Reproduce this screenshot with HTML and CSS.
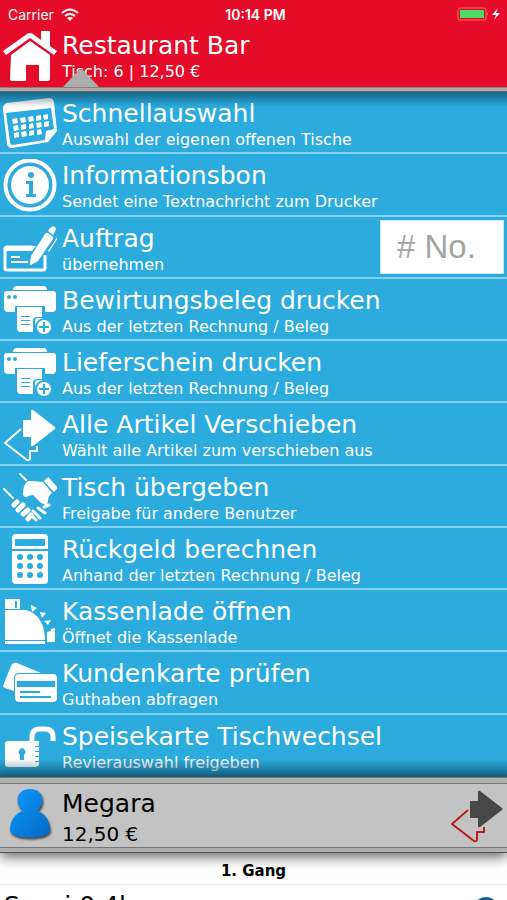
FILE: index.html
```html
<!DOCTYPE html>
<html lang="de">
<head>
<meta charset="utf-8">
<meta name="viewport" content="width=device-width, initial-scale=1">
<title>Restaurant Bar</title>
<link rel="stylesheet" href="styles.css">
</head>
<body>
<svg class="defs" aria-hidden="true">
  <symbol id="printer" viewBox="0 0 54 56">
    <path d="M14 2h26q4 0 4 4H10q0-4 4-4z"/>
    <path d="M4 7h46q3 0 3 3v14q0 4-4 4H5q-4 0-4-4V10q0-3 3-3z"/>
    <g class="cut"><circle cx="6" cy="13" r="2"/><circle cx="12" cy="13" r="2"/><path d="M12 22h30v8H12z"/></g>
    <path d="M14 23h25v13l-4 12H18q-4 0-4-4z"/>
    <g class="cut"><path d="M18 32h9v1h-9zM18 36h9v1h-9zM18 40h9v1h-9zM30 48V37q0-4 4-4h7v15z"/></g>
    <path d="M32 44v-7q0-3 3-3h5z"/>
    <circle class="cut" cx="41" cy="43" r="9"/><circle cx="41" cy="43" r="7"/>
    <path class="cut" d="M40 38h2v4h4v2h-4v4h-2v-4h-4v-2h4z"/>
  </symbol>
  <symbol id="move" viewBox="0 0 54 56">
    <path d="M18 21 2 35l22 17q3 1 3-2v-7h7v-5" fill="none" stroke="currentColor" stroke-width="2" stroke-linejoin="round"/>
    <path d="M20 12h8V3q0-2 2-1l22 17q1 1 0 2L30 38q-2 1-2-1v-8h-8z"/>
  </symbol>
</svg>

<main class="app">
  <div class="status">
    <span class="carrier">Carrier
      <svg class="wifi" viewBox="0 0 18 13"><path d="M1 5q8-7 16 0M4 8q5-4 10 0" fill="none" stroke="#fff" stroke-width="2"/><path d="M6 10q3-2 6 0l-3 3z" fill="#fff"/></svg>
    </span>
    <time class="clock">10:14 PM</time>
    <svg class="battery" viewBox="0 0 46 14"><rect x="1" y="1" width="28" height="12" rx="2" fill="none" stroke="#f0705a"/><rect x="3" y="3" width="24" height="8" fill="#4cd964"/><path d="M30 5q2 2 0 4z" fill="#f0705a"/><path d="M41 1l-6 7h4l-2 5 6-7h-4z" fill="#fff"/></svg>
  </div>

  <header class="row header">
    <svg class="icon" viewBox="0 0 54 56"><path d="M0 22 24 5q3-2 6 0l8 6V2h9v15l7 5-3 4L27 9 3 26z"/><path d="M8 26 27 12l20 14v24q0 2-2 2h-9V36H23v16H9q-2 0-2-2z"/></svg>
    <div class="text"><h1 class="title">Restaurant Bar</h1><p class="sub">Tisch: 6 | 12,50 €</p></div>
    <svg class="pointer" viewBox="0 0 36 18"><path d="M0 18 15 2q3-3 6 0l15 16z"/></svg>
  </header>

  <div class="rail"></div>

  <nav class="menu">
    <button class="row item" type="button">
      <svg class="icon" viewBox="0 0 54 56"><path fill-rule="evenodd" d="M4 6 46 1q4 0 5 4l3 29-9 11-36 6q-4 0-5-4L0 12q0-5 4-6zM3 16l4 29q0 3 3 3l32-5 1-9 8-2-3-21z"/><path d="m9 22 5-1 1 5-5 1zm8-1 5-1 1 5-5 1zm8-1 5-1 1 5-5 1zm8-1 5-1v5l-5 1zm7-1 5-1v5l-4 1zM10 29l5-1 1 5-5 1zm8-1 5-1v5l-5 1zm8-1 4-1 1 5-5 1zm7-1 5-1 1 5-5 1zm8-1 5-1v5l-5 1zM11 36l5-1v5l-5 1zm7-1 5-1 1 5-5 1zm8-1 5-1v5l-5 1zm8-1 4-1 1 5-5 1z"/></svg>
      <span class="text"><span class="title">Schnellauswahl</span><span class="sub">Auswahl der eigenen offenen Tische</span></span>
    </button>
    <button class="row item" type="button">
      <svg class="icon" viewBox="0 0 54 56"><circle cx="27" cy="26" r="24.500" fill="none" stroke="#fff" stroke-width="4"/><circle cx="27" cy="26" r="19"/><g class="cut"><circle cx="28" cy="16" r="3"/><path d="M23 22h7v13h3v3H23v-3h3V25h-3z"/></g></svg>
      <span class="text"><span class="title">Informationsbon</span><span class="sub">Sendet eine Textnachricht zum Drucker</span></span>
    </button>
    <div class="row item">
      <svg class="icon" viewBox="0 0 54 56"><path d="M30 25H4q-2 0-2 2v19q0 2 2 2h36q2 0 2-2V33" fill="none" stroke="#fff" stroke-width="3"/><path d="M3 24h30l-4 5H3zM8 34h9v2H8zM8 39h17v2H8z"/><path d="M28 34 42 12q1-2 3-1l4 3q2 1 1 3L35 39l-7 4q-2 0-1-2zM45 9l2-3 3-2 3 2-1 4-2 3zM51 20l3-5 1 1-9 14-1-1z"/></svg>
      <label class="text" for="order"><span class="title">Auftrag</span><span class="sub">übernehmen</span></label>
      <input class="number" id="order" type="text" placeholder="# No.">
    </div>
    <button class="row item" type="button">
      <svg class="icon"><use href="#printer"/></svg>
      <span class="text"><span class="title">Bewirtungsbeleg drucken</span><span class="sub">Aus der letzten Rechnung / Beleg</span></span>
    </button>
    <button class="row item" type="button">
      <svg class="icon"><use href="#printer"/></svg>
      <span class="text"><span class="title">Lieferschein drucken</span><span class="sub">Aus der letzten Rechnung / Beleg</span></span>
    </button>
    <button class="row item" type="button">
      <svg class="icon"><use href="#move"/></svg>
      <span class="text"><span class="title">Alle Artikel Verschieben</span><span class="sub">Wählt alle Artikel zum verschieben aus</span></span>
    </button>
    <button class="row item" type="button">
      <svg class="icon" viewBox="0 0 54 56"><g fill="none" stroke="#fff" stroke-linecap="round"><path d="m17 3 6 6M1 18l9 9" stroke-width="2"/><path d="m43 8 10 11" stroke-width="6" stroke-linecap="butt"/><path d="m11 34 3-3M15 39l5-5M20 43l5-4M25 48l3-4" stroke-width="5"/><path d="m30 40 7 7M35 37l7 5M30 46l3 3M41 36l5-2" stroke-width="3"/></g><path d="M20 23q0-10 5-13 8 0 15 1l9 11q-4 3-4 8 0 3-2 4l-5-2-8-8q-4 0-6 2-3 1-4-3z"/></svg>
      <span class="text"><span class="title">Tisch übergeben</span><span class="sub">Freigabe für andere Benutzer</span></span>
    </button>
    <button class="row item" type="button">
      <svg class="icon" viewBox="0 0 54 56"><path fill-rule="evenodd" d="M13 1h28q4 0 4 4v11H9V5q0-4 4-4zM12 6v7h30V6z"/><path d="M9 18h36v29q0 4-4 4H13q-4 0-4-4z"/><g class="cut"><circle cx="17" cy="24" r="3"/><circle cx="27" cy="24" r="3"/><circle cx="37" cy="24" r="3"/><circle cx="17" cy="33" r="3"/><circle cx="27" cy="33" r="3"/><circle cx="37" cy="33" r="3"/><circle cx="17" cy="42" r="3"/><circle cx="27" cy="42" r="3"/><circle cx="37" cy="42" r="3"/></g></svg>
      <span class="text"><span class="title">Rückgeld berechnen</span><span class="sub">Anhand der letzten Rechnung / Beleg</span></span>
    </button>
    <button class="row item" type="button">
      <svg class="icon" viewBox="0 0 54 56"><path fill-rule="evenodd" d="M2 4h15v10H2zM12 6v7h2V6zM2 15h21c12 3 19 14 19 30H2zM2 46h40v3H2zM44 37l4-1v-2l4-1v14h-8zM28 10l6 3-5 4zM37 17l6 1-4 5zM41 26l7-1-3 5z"/></svg>
      <span class="text"><span class="title">Kassenlade öffnen</span><span class="sub">Öffnet die Kassenlade</span></span>
    </button>
    <button class="row item" type="button">
      <svg class="icon" viewBox="0 0 54 56"><path d="M0 29 8 9q2-4 6-3l24 10H16q-5 0-5 5v13l-9-3q-2-1-2-2z"/><path fill-rule="evenodd" d="M16 17h34q4 0 4 4v20q0 4-4 4H16q-4 0-4-4V21q0-4 4-4zM14 24v6h38v-6zM17 34v2h20v-2zM17 39v2h31v-2z"/></svg>
      <span class="text"><span class="title">Kundenkarte prüfen</span><span class="sub">Guthaben abfragen</span></span>
    </button>
    <button class="row item" type="button">
      <svg class="icon" viewBox="0 0 54 56"><path d="M29 21v-4q0-8 8-8h5q8 0 8 8v4" fill="none" stroke="#fff" stroke-width="5"/><path fill-rule="evenodd" d="M5 21h31v5h-4v1h4v4h-4v1h4v4h-4v1h4v4h-4v1h4v3q-1 2-4 2H5q-3 0-3-3V24q0-3 3-3zM19 28a4 4 0 0 0-2 7v5h4v-5a4 4 0 0 0-2-7z"/></svg>
      <span class="text"><span class="title">Speisekarte Tischwechsel</span><span class="sub">Revierauswahl freigeben</span></span>
    </button>
  </nav>

  <section class="guest">
    <div class="row person">
      <svg class="icon" viewBox="0 0 54 56"><defs><linearGradient id="skin" x1="0" y1="0" x2="1" y2="1"><stop offset="0" stop-color="#0a9bff"/><stop offset="1" stop-color="#0568c4"/></linearGradient></defs><path class="avatar" d="M27 2c14 0 16 15 7 22 8 2 13 10 13 19 0 10-40 10-40 0 0-9 5-17 13-19C11 17 13 2 27 2z"/></svg>
      <div class="text"><h2 class="title">Megara</h2><p class="sub amount">12,50 €</p></div>
      <button class="move" type="button" aria-label="Verschieben"><svg class="icon duo"><use href="#move"/></svg></button>
    </div>
  </section>

  <h3 class="course">1. Gang</h3>
  <div class="dish"><span class="title">Spezi 0,4l</span><span class="dot"></span></div>
</main>
</body>
</html>
```
FILE: styles.css
```css
* { box-sizing: border-box; }

body {
  margin: 0;
  background: #fff;
  font-family: Verdana, "DejaVu Sans", sans-serif;
  color: #fff;
}

h1, h2, h3, p { margin: 0; font-weight: 400; }

button {
  border: 0;
  padding: 0;
  background: none;
  color: inherit;
  font: inherit;
  text-align: left;
}

.defs { display: none; }

.app {
  display: flex;
  flex-direction: column;
  height: 100vh;
  overflow: hidden;
}

.status {
  display: grid;
  grid-template-columns: 1fr auto 1fr;
  align-items: center;
  height: 28px;
  padding: 0 4px 0 8px;
  background: #e60b29;
  font: 14px Inter, "Liberation Sans", sans-serif;
}

.carrier { display: flex; align-items: center; gap: 7px; }
.clock { font-weight: 600; }
.wifi { width: 18px; height: 13px; }
.battery { width: 46px; height: 14px; justify-self: end; }

.row {
  display: flex;
  gap: 5px;
  padding: 0 3px;
}

.icon { flex: none; display: block; width: 54px; height: 56px; fill: #fff; }
.cut { fill: #2cabde; }

.text { flex: 1; display: block; padding-top: 1px; white-space: nowrap; }
.title { display: block; font-size: 25px; line-height: 32px; }
.sub { display: block; font-size: 16px; line-height: 20px; }

.header {
  position: relative;
  height: 59px;
  padding-top: 1px;
  background: #e60b29;
}

.pointer {
  position: absolute;
  left: 63px;
  bottom: 0;
  width: 36px;
  height: 18px;
  fill: #adadad;
}

.rail {
  height: 5px;
  background: #b0acac;
  border-top: 1px solid #8c7c7c;
  border-bottom: 1px solid #666;
}

.menu {
  position: relative;
  flex: 1;
  display: grid;
  grid-auto-rows: 1fr;
  min-height: 0;
  background: #2cabde;
}

.menu::after {
  content: "";
  position: absolute;
  inset: 0;
  pointer-events: none;
  background:
    linear-gradient(rgba(0, 30, 45, .5), transparent) top / 100% 15px no-repeat,
    linear-gradient(transparent, rgba(0, 30, 45, .5)) bottom / 100% 18px no-repeat;
}

.item {
  min-height: 0;
  padding-top: 5px;
  border-bottom: 2px solid #86d0f0;
  overflow: hidden;
}

.item:last-child { border-bottom: 0; }

.number {
  width: 124px;
  height: 54px;
  margin-top: -2px;
  padding: 0 16px;
  border: 1px solid #c8eaf8;
  background: #fff;
  color: #555;
  font: 33px "Liberation Sans", sans-serif;
}

.number::placeholder { color: #a5a5a5; opacity: 1; }

.guest {
  position: relative;
  z-index: 1;
  padding: 5px 0 4px;
  background: #b0b0b0;
  border-top: 1px solid #777;
  border-bottom: 1px solid #555;
  box-shadow: 0 4px 12px rgba(0, 0, 0, .6);
}

.person {
  height: 65px;
  padding-top: 3px;
  background: #c3c3c3;
  border-top: 1px solid #777;
  border-bottom: 1px solid #777;
  color: #000;
}

.avatar { fill: url(#skin); filter: drop-shadow(1px 2px 1px #444); }
.amount { font-size: 20px; line-height: 28px; }
.duo { fill: #474747; color: #b81c1c; }

.course {
  height: 32px;
  padding-top: 7px;
  border-bottom: 1px solid #eee;
  color: #000;
  font-size: 15px;
  font-weight: 700;
  line-height: 22px;
  text-align: center;
}

.dish {
  display: flex;
  justify-content: space-between;
  height: 15px;
  padding: 5px 8px 0 4px;
  color: #000;
}

.dot {
  width: 26px;
  height: 26px;
  margin-top: 7px;
  border-radius: 50%;
  background: #17609f;
}
```
